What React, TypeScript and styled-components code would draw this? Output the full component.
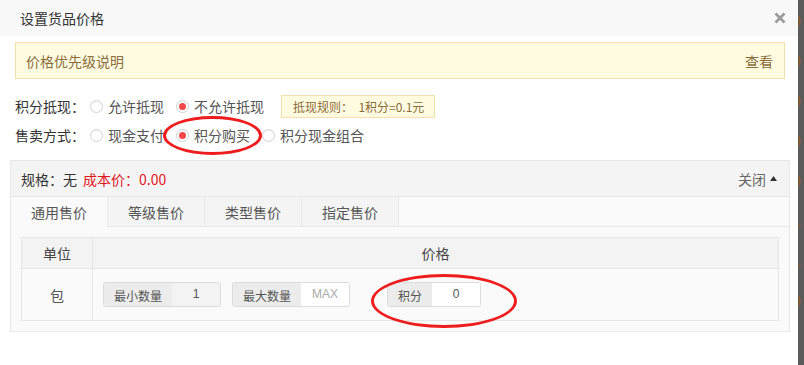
import React from "react";
import styled, { createGlobalStyle } from "styled-components";

const Global = createGlobalStyle`
  html, body { margin: 0; padding: 0; background: #fff; }
  body { font-family: "Microsoft YaHei", "Noto Sans CJK SC", "Liberation Sans", sans-serif; color: #333; }
  * { box-sizing: border-box; }
`;

const Page = styled.div`
  position: relative;
  display: flex;
  width: 804px;
  height: 365px;
  overflow: hidden;
`;

const Modal = styled.div`
  width: 798px;
  height: 365px;
  background: #fff;
  display: flex;
  flex-direction: column;
`;

const Backdrop = styled.div`
  flex: 1;
  background: #5b5b5b;
  display: flex;
  flex-direction: column;
  overflow: hidden;
  padding-top: 12px;
  gap: 22px;
`;

const BackdropGlyph = styled.span`
  font-family: "Liberation Sans", sans-serif;
  font-size: 14px;
  line-height: 18px;
  color: #9a5a1e;
  margin-left: -5px;
`;

const Header = styled.div`
  height: 36px;
  background: #f8f8f8;
  display: flex;
  align-items: center;
  justify-content: space-between;
  padding: 0 12px 0 20px;
  font-size: 14px;
  color: #333;
`;

const Close = styled.svg`
  width: 12px;
  height: 12px;
`;

const Alert = styled.div`
  margin: 6px 13px 0 15px;
  height: 37px;
  background: #fffbe1;
  border: 1px solid #f3deae;
  display: flex;
  align-items: center;
  justify-content: space-between;
  padding: 0 11px 0 10px;
  font-size: 14px;
  color: #8a6d3b;
`;

const Rows = styled.div`
  margin: 15px 0 0 15px;
  display: flex;
  flex-direction: column;
  gap: 5px;
`;

const Row = styled.div`
  height: 24px;
  display: flex;
  align-items: center;
  font-size: 14px;
  color: #555;
`;

const RowLabel = styled.span`
  width: 75px;
  color: #333;
`;

const RadioItem = styled.label`
  display: flex;
  align-items: center;
  gap: 5px;
  margin-right: 12px;
  color: #555;
`;

const RadioCircle = styled.span<{ $on?: boolean }>`
  width: 13px;
  height: 13px;
  border-radius: 50%;
  border: 1px solid #d2d2d2;
  background: #fff;
  display: flex;
  align-items: center;
  justify-content: center;
  box-shadow: inset 0 1px 1px rgba(0,0,0,0.06);
  &::after {
    content: "";
    width: 7px;
    height: 7px;
    border-radius: 50%;
    background: ${(p) => (p.$on ? "#f2484b" : "transparent")};
  }
`;

const Tag = styled.span`
  margin-left: 5px;
  height: 23px;
  display: flex;
  align-items: center;
  padding: 0 10px 0 11px;
  background: #fffbe1;
  border: 1px solid #f3deae;
  font-size: 12px;
  color: #8a6d3b;
  white-space: pre;
`;

const Panel = styled.div`
  margin: 13px 8px 0 10px;
  border: 1px solid #e8e8e8;
  background: #fafafa;
`;

const PanelHead = styled.div`
  height: 36px;
  background: #f4f4f4;
  border-bottom: 1px solid #e8e8e8;
  display: flex;
  align-items: center;
  justify-content: space-between;
  padding: 0 12px 0 10px;
  font-size: 14px;
  color: #333;
`;

const Red = styled.span`
  color: #e3141c;
  margin-left: 6px;
`;

const Toggle = styled.span`
  display: flex;
  align-items: center;
  gap: 4px;
  color: #666;
`;

const Tabs = styled.div`
  display: flex;
  height: 30px;
`;

const Tab = styled.div<{ $active?: boolean }>`
  width: 97px;
  display: flex;
  align-items: center;
  justify-content: center;
  font-size: 14px;
  color: #555;
  background: ${(p) => (p.$active ? "#fafafa" : "#f4f4f4")};
  border-right: 1px solid #e8e8e8;
  border-bottom: 1px solid ${(p) => (p.$active ? "transparent" : "#e8e8e8")};
`;

const TabFill = styled.div`
  flex: 1;
  border-bottom: 1px solid #e8e8e8;
`;

const PanelBody = styled.div`
  padding: 10px 10px 10px 10px;
`;

const Table = styled.div`
  display: grid;
  grid-template-columns: 71px 1fr;
  border: 1px solid #e6e6e6;
  font-size: 14px;
  color: #555;
`;

const Th = styled.div<{ $last?: boolean }>`
  height: 31px;
  background: #f3f3f3;
  border-bottom: 1px solid #e6e6e6;
  border-right: ${(p) => (p.$last ? "none" : "1px solid #e6e6e6")};
  display: flex;
  align-items: center;
  justify-content: center;
  color: #444;
`;

const TdUnit = styled.div`
  height: 51px;
  border-right: 1px solid #e6e6e6;
  display: flex;
  align-items: center;
  justify-content: center;
  background: #fafafa;
`;

const TdPrice = styled.div`
  height: 51px;
  display: flex;
  align-items: center;
  padding: 0 0 0 10px;
  background: #fafafa;
`;

const Group = styled.div<{ $gap?: number }>`
  display: flex;
  height: 25px;
  border: 1px solid #dcdcdc;
  border-radius: 3px;
  overflow: hidden;
  margin-right: ${(p) => p.$gap ?? 11}px;
  font-size: 12px;
`;

const Addon = styled.span<{ $w: number }>`
  width: ${(p) => p.$w}px;
  background: #ececec;
  color: #555;
  display: flex;
  align-items: center;
  justify-content: center;
  padding-top: 2px;
`;

const Val = styled.span<{ $w: number; $bg: string; $muted?: boolean }>`
  width: ${(p) => p.$w}px;
  background: ${(p) => p.$bg};
  color: ${(p) => (p.$muted ? "#aaa" : "#555")};
  display: flex;
  align-items: center;
  justify-content: center;
  font-family: "Liberation Sans", "Noto Sans CJK SC", sans-serif;
  padding-bottom: 2px;
`;

const Ring = styled.div`
  position: absolute;
  border: 3px solid #ee1c1c;
  border-radius: 50%;
  pointer-events: none;
`;

const radio = (text: string, on?: boolean) => (
  <RadioItem>
    <RadioCircle $on={on} />
    {text}
  </RadioItem>
);

export default function App() {
  return (
    <>
      <Global />
      <Page>
        <Modal>
          <Header>
            <span>设置货品价格</span>
            <Close viewBox="0 0 12 12">
              <path d="M1.5 1.5 L10.5 10.5 M10.5 1.5 L1.5 10.5" stroke="#9a9a9a" strokeWidth="2.6" strokeLinecap="butt" />
            </Close>
          </Header>
          <Alert>
            <span>价格优先级说明</span>
            <span>查看</span>
          </Alert>
          <Rows>
            <Row>
              <RowLabel>积分抵现：</RowLabel>
              {radio("允许抵现")}
              {radio("不允许抵现", true)}
              <Tag>{"抵现规则：  1积分=0.1元"}</Tag>
            </Row>
            <Row>
              <RowLabel>售卖方式：</RowLabel>
              {radio("现金支付")}
              {radio("积分购买", true)}
              {radio("积分现金组合")}
            </Row>
          </Rows>
          <Panel>
            <PanelHead>
              <span>
                规格：无<Red>成本价：0.00</Red>
              </span>
              <Toggle>
                关闭
                <svg width="7" height="5" viewBox="0 0 7 5">
                  <path d="M0 5 L3.5 0 L7 5 Z" fill="#333" />
                </svg>
              </Toggle>
            </PanelHead>
            <Tabs>
              <Tab $active>通用售价</Tab>
              <Tab>等级售价</Tab>
              <Tab>类型售价</Tab>
              <Tab>指定售价</Tab>
              <TabFill />
            </Tabs>
            <PanelBody>
              <Table>
                <Th>单位</Th>
                <Th $last>价格</Th>
                <TdUnit>包</TdUnit>
                <TdPrice>
                  <Group>
                    <Addon $w={68}>最小数量</Addon>
                    <Val $w={48} $bg="#f3f3f3">1</Val>
                  </Group>
                  <Group $gap={37}>
                    <Addon $w={68}>最大数量</Addon>
                    <Val $w={48} $bg="#fff" $muted>MAX</Val>
                  </Group>
                  <Group>
                    <Addon $w={44}>积分</Addon>
                    <Val $w={48} $bg="#fff">0</Val>
                  </Group>
                </TdPrice>
              </Table>
            </PanelBody>
          </Panel>
        </Modal>
        <Backdrop>
          {["0", "0", "0", "0", "0", "L", "L", "0"].map((g, i) => (
            <BackdropGlyph key={i}>{g}</BackdropGlyph>
          ))}
        </Backdrop>
        <Ring style={{ left: 163, top: 116, width: 99, height: 39 }} />
        <Ring style={{ left: 371, top: 274, width: 146, height: 54 }} />
      </Page>
    </>
  );
}
